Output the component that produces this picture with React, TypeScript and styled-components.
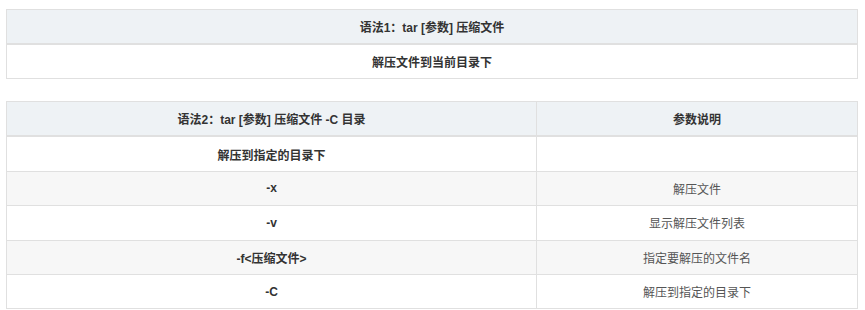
import React from 'react';
import styled, { createGlobalStyle } from 'styled-components';

const GlobalStyle = createGlobalStyle`
  html, body {
    margin: 0;
    padding: 0;
    background: #fff;
  }
  body {
    font-family: "Liberation Sans", "Noto Sans CJK SC", sans-serif;
    font-size: 12px;
    color: #333;
  }
`;

const Page = styled.div`
  width: 852px;
  padding: 9px 0 0 6px;
  display: flex;
  flex-direction: column;
  gap: 22px;
`;

const Table = styled.table`
  width: 100%;
  border-collapse: collapse;
  table-layout: fixed;
  border: 1px solid #e0e0e0;
`;

const HeadCell = styled.th`
  height: 33px;
  padding: 0 8px;
  background: #eef2f5;
  border: 1px solid #e0e0e0;
  border-bottom: 2px solid #e0e0e0;
  font-weight: bold;
  text-align: center;
  color: #333;
`;

const Row = styled.tr<{ $striped?: boolean }>`
  background: ${p => (p.$striped ? '#f7f7f7' : '#fff')};
`;

const Cell = styled.td<{ $bold?: boolean }>`
  height: 33.4px;
  padding: 0 8px;
  border: 1px solid #e0e0e0;
  text-align: center;
  font-weight: ${p => (p.$bold ? 'bold' : 'normal')};
  color: ${p => (p.$bold ? '#333' : '#555')};
`;

const options = [
  { flag: '-x', desc: '解压文件' },
  { flag: '-v', desc: '显示解压文件列表' },
  { flag: '-f<压缩文件>', desc: '指定要解压的文件名' },
  { flag: '-C', desc: '解压到指定的目录下' },
];

export default function App() {
  return (
    <>
      <GlobalStyle />
      <Page>
        <Table>
          <thead>
            <tr>
              <HeadCell>语法1：tar [参数] 压缩文件</HeadCell>
            </tr>
          </thead>
          <tbody>
            <Row>
              <Cell $bold>解压文件到当前目录下</Cell>
            </Row>
          </tbody>
        </Table>
        <Table>
          <colgroup>
            <col style={{ width: 530 }} />
            <col />
          </colgroup>
          <thead>
            <tr>
              <HeadCell>语法2：tar [参数] 压缩文件 -C 目录</HeadCell>
              <HeadCell>参数说明</HeadCell>
            </tr>
          </thead>
          <tbody>
            <Row>
              <Cell $bold>解压到指定的目录下</Cell>
              <Cell />
            </Row>
            {options.map((o, i) => (
              <Row key={o.flag} $striped={i % 2 === 0}>
                <Cell $bold>{o.flag}</Cell>
                <Cell>{o.desc}</Cell>
              </Row>
            ))}
          </tbody>
        </Table>
      </Page>
    </>
  );
}
